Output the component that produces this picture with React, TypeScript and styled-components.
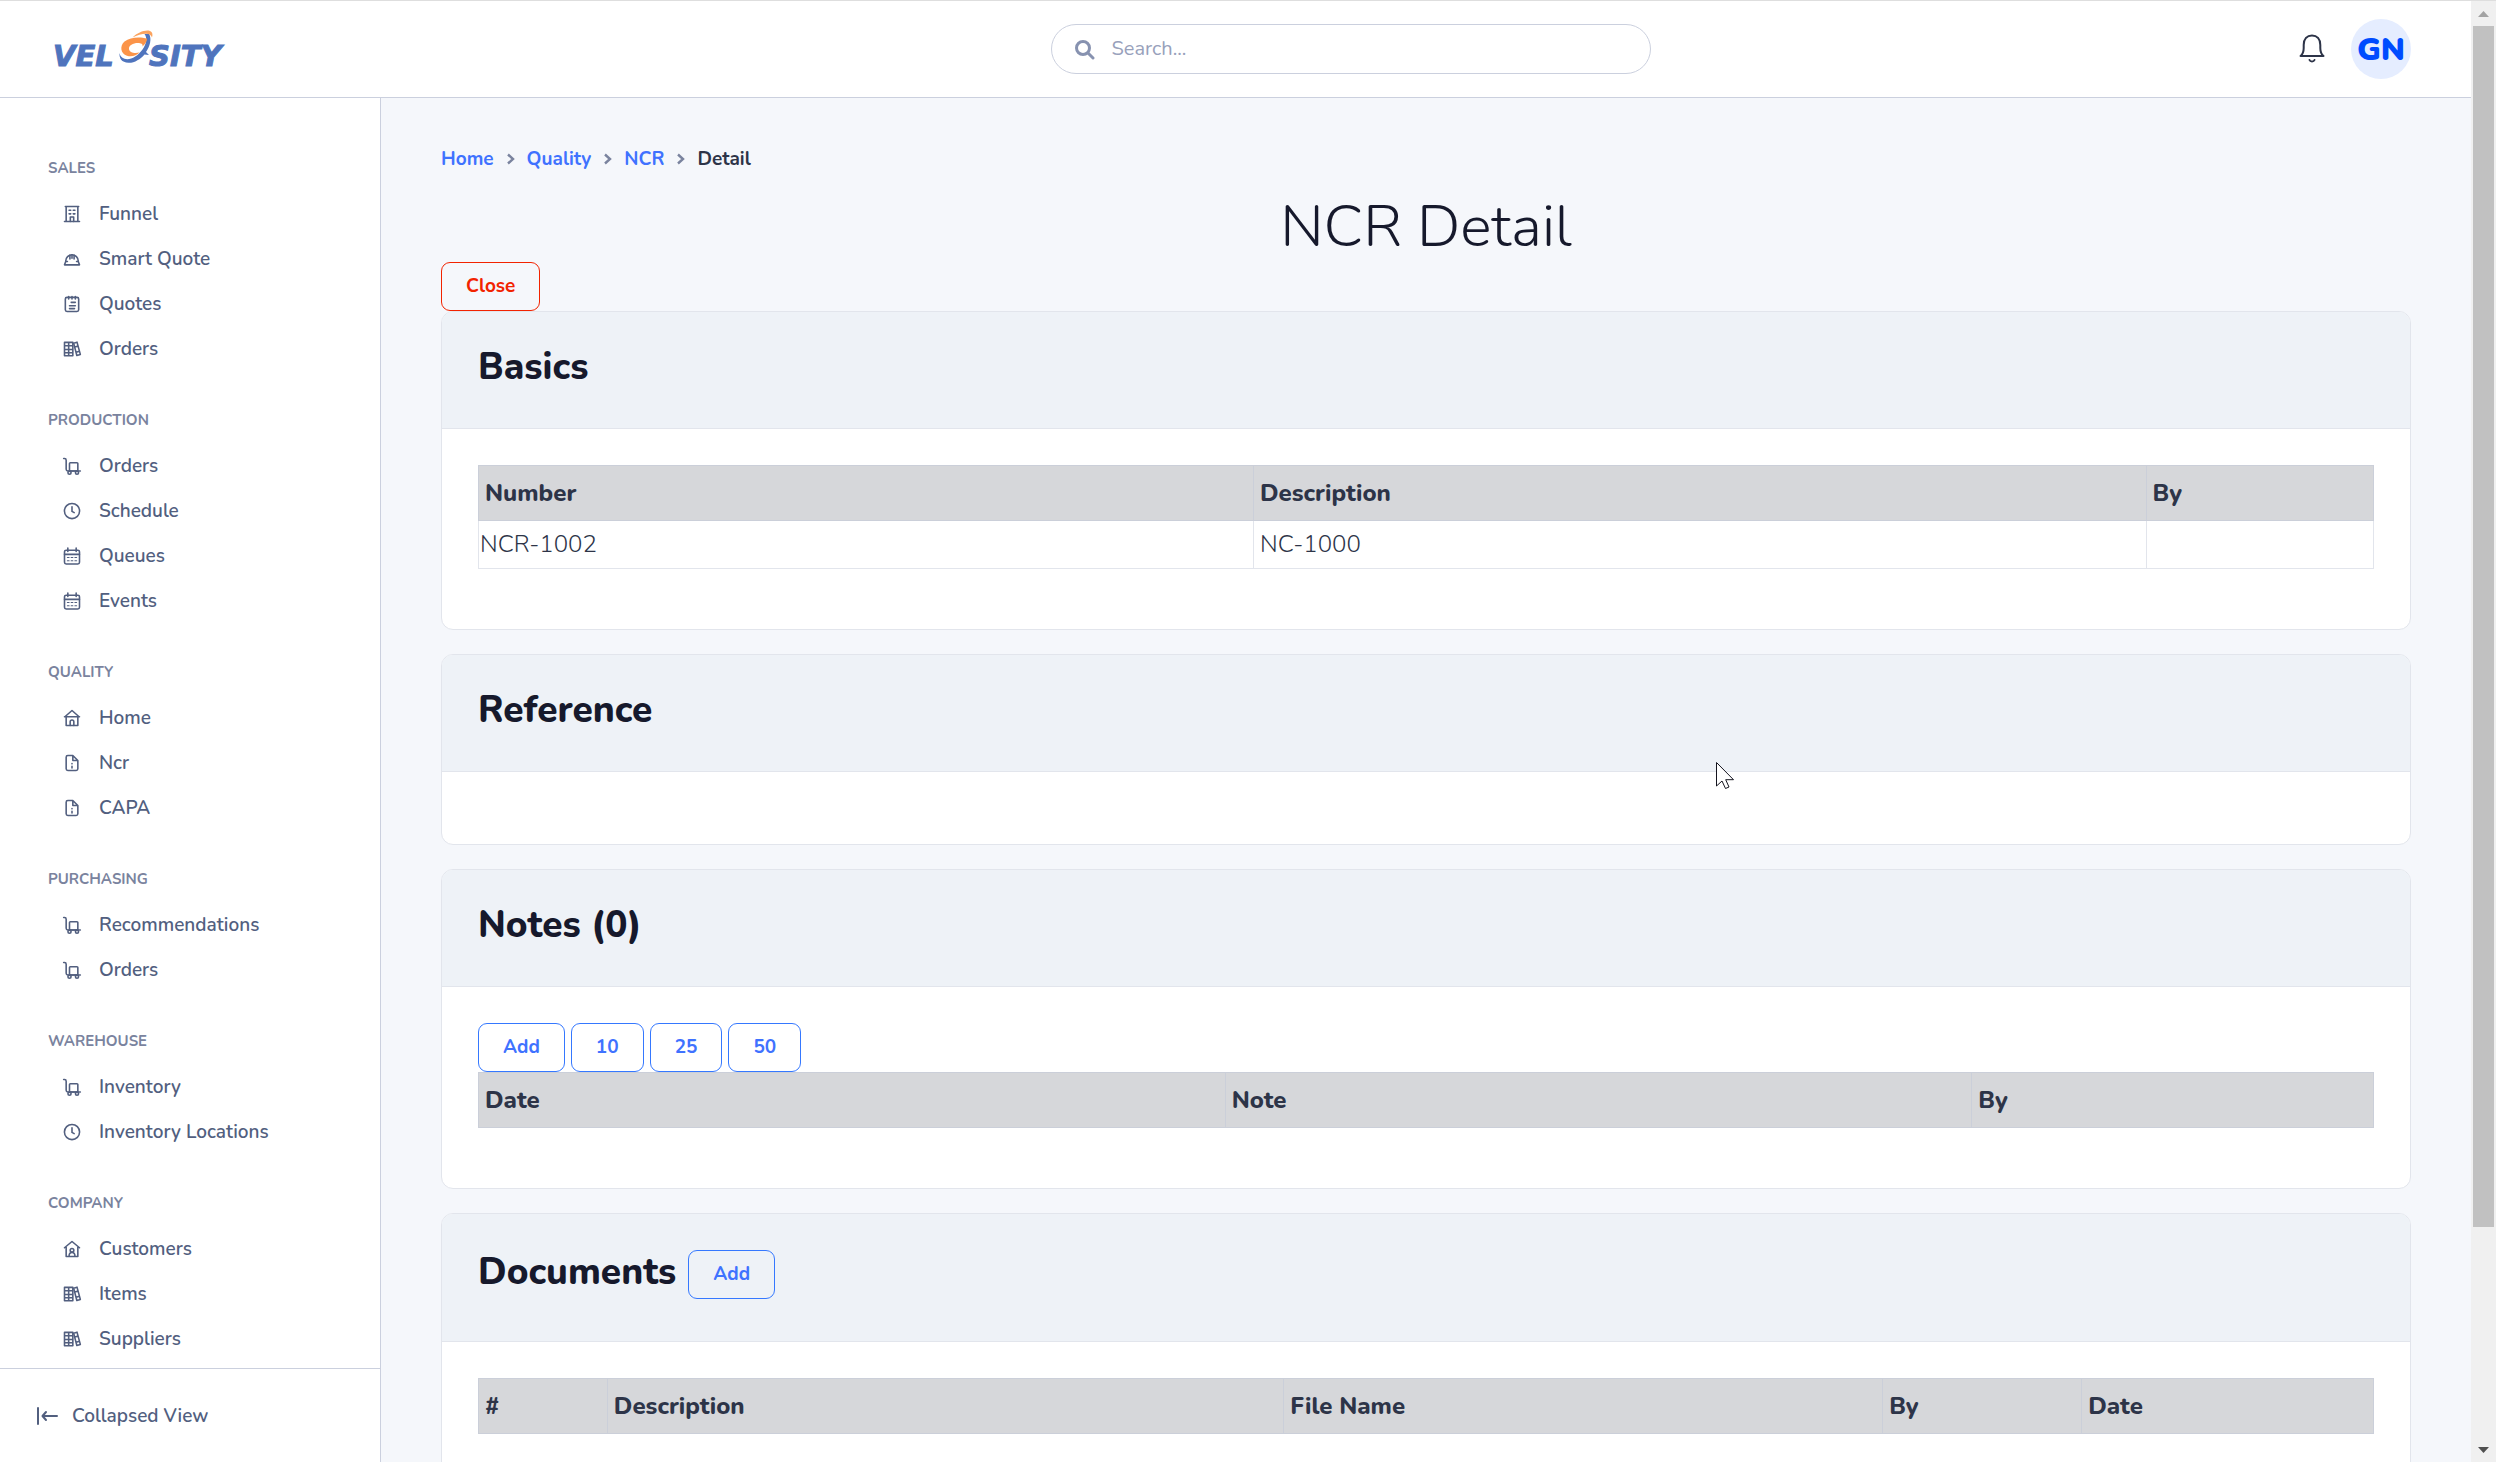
import React from "react";
import styled, { createGlobalStyle } from "styled-components";

const color = {
  ink: "#16192c",
  text: "#2d3448",
  nav: "#525f7f",
  muted: "#7a839e",
  line: "#cbd0de",
  cardLine: "#e2e5ec",
  page: "#f5f7fb",
  cardHead: "#eef2f7",
  tableHead: "#d6d7da",
  primary: "#3f72ff",
  danger: "#f22300",
};

const GlobalStyle = createGlobalStyle`
  *, *::before, *::after { box-sizing: border-box; }
  body {
    margin: 0;
    background: ${color.page};
    color: ${color.text};
    font-family: Nunito, Lato, "Open Sans", sans-serif;
    font-size: 24px;
    line-height: 36px;
  }
  h1, h2, h3, ul, ol { margin: 0; padding: 0; }
  ul, ol { list-style: none; }
  a { text-decoration: none; }
  button, input { font: inherit; }
`;

/* ---------- shell ---------- */

const Shell = styled.div`
  position: relative;
  display: flex;
  height: 100vh;
  overflow: hidden;
  border-top: 1px solid #dedede;
`;

const Frame = styled.div`
  flex: 1;
  min-width: 0;
  display: flex;
  flex-direction: column;
`;

const TopBar = styled.header`
  flex: none;
  display: flex;
  align-items: center;
  justify-content: space-between;
  height: 97px;
  padding-right: 60px;
  background: #fff;
  border-bottom: 1px solid ${color.line};
`;

const Brand = styled.a`
  display: flex;
  width: 402px;
  padding-left: 48px;
`;

const SearchBox = styled.label`
  display: flex;
  align-items: center;
  gap: 17px;
  width: 600px;
  height: 50px;
  padding: 0 22px;
  border: 1px solid ${color.line};
  border-radius: 25px;
  color: #8792b0;
`;

const SearchInput = styled.input`
  flex: 1;
  min-width: 0;
  padding: 0;
  border: 0;
  outline: 0;
  background: none;
  color: ${color.text};
  font-size: 20px;
  &::placeholder { color: #98a1bb; opacity: 1; }
`;

const Account = styled.div`
  display: flex;
  align-items: center;
  gap: 26px;
`;

const BellButton = styled.button`
  display: flex;
  padding: 0;
  border: 0;
  background: none;
  color: ${color.text};
`;

const Avatar = styled.button`
  width: 60px;
  height: 60px;
  padding: 2px 0 0;
  border: 0;
  border-radius: 50%;
  background: #e5edff;
  color: #004cff;
  font-size: 32px;
  font-weight: 900;
`;

const Columns = styled.div`
  flex: 1;
  min-height: 0;
  display: flex;
`;

/* ---------- sidebar ---------- */

const Sidebar = styled.nav`
  flex: none;
  display: flex;
  flex-direction: column;
  width: 381px;
  background: #fff;
  border-right: 1px solid ${color.line};
`;

const NavScroll = styled.div`
  flex: 1;
  min-height: 0;
  overflow: hidden;
  display: flex;
  flex-direction: column;
  gap: 26px;
  padding: 47px 48px 0;
`;

const NavHeading = styled.h3`
  color: ${color.muted};
  font-size: 15px;
  font-weight: 700;
  line-height: 46px;
  text-transform: uppercase;
`;

const NavLink = styled.a`
  display: flex;
  align-items: center;
  gap: 17px;
  height: 45px;
  padding-left: 14px;
  color: ${color.nav};
  font-size: 19px;
  font-weight: 600;
`;

const CollapseButton = styled.button`
  display: flex;
  align-items: center;
  gap: 14px;
  height: 94px;
  padding: 0 37px;
  border: 0;
  border-top: 1px solid ${color.line};
  background: none;
  color: ${color.nav};
  font-size: 19px;
  font-weight: 600;
`;

/* ---------- content ---------- */

const Content = styled.main`
  flex: 1;
  min-width: 0;
  overflow: hidden;
  padding: 47px 60px 0;
`;

const Crumbs = styled.ol`
  display: flex;
  align-items: center;
  gap: 12px;
  height: 28px;
  font-size: 19px;
  font-weight: 700;
`;

const Crumb = styled.li`
  display: flex;
  align-items: center;
  gap: 12px;
  color: ${color.text};
  a { color: ${color.primary}; }
  svg { color: ${color.muted}; }
`;

const PageTitle = styled.h1`
  margin-top: 18px;
  color: ${color.ink};
  font-size: 59px;
  font-weight: 350;
  line-height: 71px;
  text-align: center;
`;

const ButtonRow = styled.div`
  display: flex;
  gap: 6px;
`;

const OutlineButton = styled.button<{ $tone?: "primary" | "danger" }>`
  height: 49px;
  padding: 0 24px 2px;
  border: 1px solid ${(p) => (p.$tone === "danger" ? color.danger : "#3578ff")};
  border-radius: 9px;
  background: transparent;
  color: ${(p) => (p.$tone === "danger" ? color.danger : color.primary)};
  font-size: 19px;
  font-weight: 700;
  line-height: 28px;
`;

const Card = styled.section`
  margin-bottom: 24px;
  border: 1px solid ${color.cardLine};
  border-radius: 12px;
  background: #fff;
  overflow: hidden;
`;

const CardHeader = styled.header`
  display: flex;
  align-items: flex-start;
  gap: 12px;
  padding: 36px 36px 42px;
  background: ${color.cardHead};
  border-bottom: 1px solid ${color.cardLine};
`;

const CardTitle = styled.h2<{ $tall?: boolean }>`
  color: ${color.ink};
  font-size: 37px;
  font-weight: 800;
  line-height: ${(p) => (p.$tall ? 44 : 38)}px;
`;

const CardBody = styled.div`
  padding: 36px;
`;

const DataTable = styled.table`
  width: 100%;
  margin-bottom: 24px;
  border-collapse: collapse;
  table-layout: fixed;
`;

const Th = styled.th<{ $w: string }>`
  width: ${(p) => p.$w};
  height: 55px;
  padding: 0 6px;
  border: 1px solid #cbcfd9;
  background: ${color.tableHead};
  font-weight: 800;
  text-align: left;
`;

const Td = styled.td`
  height: 48px;
  padding: 0 6px 2px;
  border: 1px solid ${color.cardLine};
  font-weight: 350;
  &:first-child { padding-left: 1px; }
`;

/* ---------- scrollbar and pointer ---------- */

const ScrollTrack = styled.div`
  flex: none;
  display: flex;
  flex-direction: column;
  align-items: center;
  width: 25px;
  background: #f0f0f0;
`;

const ScrollArrow = styled.span<{ $down?: boolean }>`
  height: 25px;
  display: flex;
  align-items: center;
  color: ${(p) => (p.$down ? "#4f4f4f" : "#a3a3a3")};
`;

const ScrollThumb = styled.div`
  flex: 851;
  width: 21px;
  background: #c1c1c1;
`;

const ScrollRest = styled.div`
  flex: 149;
`;

const Pointer = styled.svg`
  position: absolute;
  left: 1716px;
  top: 761px;
  pointer-events: none;
`;

/* ---------- icons ---------- */

const iconShapes = {
  building: (
    <>
      <path d="M3 21h18M5 21V3h14v18M4 3h16" />
      <path d="M10 21v-5.500h4V21" />
      <path d="M8.500 7.500h2M13.500 7.500h2M8.500 11.800h2M13.500 11.800h2" />
    </>
  ),
  hat: (
    <>
      <path d="M4.500 15v-.5a7.500 7.500 0 0 1 15 0v.5" />
      <path d="M4.500 15h2M17.500 15h2l1.500 4H3l1.500-4" />
      <path d="M9.500 7.500V12M14.500 7.500V12M12 7v4" />
    </>
  ),
  notes: (
    <>
      <rect x="4" y="4" width="16" height="17" rx="2" />
      <path d="M8 3v3M12 3v3M16 3v3M9 14h7M11 10h5M9 17.500h6" />
    </>
  ),
  books: (
    <>
      <path d="M3 4h5v16H3zM8 4h5v16H8zM3 8h10M3 16.500h10M3 12.500h10" />
      <path d="M14 5l4-1.200L22 18.500l-4.200 1.300zM15.500 9.500l3.800-1.200M17 16l4-1.200" />
    </>
  ),
  cart: (
    <>
      <path d="M2 3h1a2 2 0 0 1 2 2v11a2 2 0 0 0 2 2h15" />
      <rect x="9" y="8" width="10" height="10" rx="1" />
      <circle cx="9" cy="20" r="1.900" />
      <circle cx="18" cy="20" r="1.900" />
    </>
  ),
  clock: (
    <>
      <circle cx="12" cy="12" r="9.100" />
      <path d="M12 7v5.500l2.600 1.500" />
    </>
  ),
  calendar: (
    <>
      <rect x="3" y="5" width="18" height="16.500" rx="2" />
      <path d="M7 2.500v4M17 2.500v4M3 10h18" />
      <path d="M6.500 13.800h2M11 13.800h2M15.500 13.800h2M6.500 17.700h2M11 17.700h2M15.500 17.700h2" strokeWidth="1.400" />
    </>
  ),
  home: (
    <>
      <path d="M3 10.500h18M3.500 10.500L12 3l8.500 7.500M5 10.500V21h14V10.500" />
      <path d="M9.800 21v-4.500a2.200 2.200 0 0 1 4.400 0V21" />
    </>
  ),
  file: (
    <>
      <path d="M13 3H7a2 2 0 0 0-2 2v14a2 2 0 0 0 2 2h10a2 2 0 0 0 2-2V9zM13 3v6h6" />
      <path d="M12 12.500v.5M12 16v2" />
    </>
  ),
  houseUser: (
    <>
      <path d="M3 10.500L12 3l9 7.500M5 9.500V21h14V9.500" />
      <circle cx="12" cy="13.500" r="2.200" />
      <path d="M8.500 20.500c0-2.800 1.500-4.400 3.500-4.400s3.500 1.600 3.500 4.400" />
    </>
  ),
};

type IconName = keyof typeof iconShapes;

const Icon = ({ name }: { name: IconName }) => (
  <svg width="20" height="20" viewBox="0 0 24 24" fill="none" stroke="currentColor" strokeWidth="1.900" strokeLinejoin="round" strokeLinecap="round" aria-hidden="true">
    {iconShapes[name]}
  </svg>
);

const Logo = () => (
  <svg width="200" height="64" viewBox="48 16 200 64" role="img" aria-label="Velosity">
    <g fill="#4f74bd" stroke="#4f74bd" strokeWidth="1" fontFamily="'DejaVu Sans', sans-serif" fontWeight="700" fontStyle="italic" fontSize="29">
      <text x="53" y="65">VEL</text>
      <text x="149" y="65">SITY</text>
    </g>
    <path d="M119.500 52c-.5 5 2 9.500 9 9.800 6 .2 12-3.600 16-8.300l4.500.5-3-3c4-6 6-13 3-18.300l-4.500.3c3 4 2 10-2 15.500-5 7-12.500 11-18 9.200-3-1-4.500-3-5-5.700z" fill="#4f74bd" />
    <path d="M147 37.500c-7-2-17-1.500-22.500 3-5 4.500-4 12 2.500 14.200 4.500 1.400 9.500 0 12.500-3.200-5 1.200-10 .2-10.500-3.500-.4-4 5-6.500 10-6 3 .3 4 1.500 3.500 3.500 3-2.500 4.500-5.500 4.500-8z" fill="#fb9449" />
    <path d="M132.500 36.500c5-5 13-8 17.500-6.500 2.500 1 3 3.500 2 6.500-.8-2.300-2.500-3.800-6-3.800-4 0-9 1.300-13.500 3.800z" fill="#fba35f" />
  </svg>
);

const SearchIcon = () => (
  <svg width="21" height="21" viewBox="0 0 21 21" fill="none" stroke="currentColor" strokeWidth="3" strokeLinecap="round" aria-hidden="true">
    <circle cx="9" cy="9" r="6.500" />
    <path d="M14 14l5 5" />
  </svg>
);

const BellIcon = () => (
  <svg width="26" height="30" viewBox="0 0 26 30" fill="none" stroke="currentColor" strokeWidth="2" strokeLinecap="round" strokeLinejoin="round" aria-hidden="true">
    <path d="M1.500 22h23c-2.300-1.800-3.200-4-3.200-8v-3C21.300 5 18 1.500 13 1.500S4.700 5 4.700 11v3c0 4-.9 6.200-3.200 8z" />
    <path d="M10.500 26c.8 2 4.200 2 5 0" />
  </svg>
);

const ChevronIcon = () => (
  <svg width="9" height="12" viewBox="0 0 9 12" fill="none" stroke="currentColor" strokeWidth="2.400" aria-hidden="true">
    <path d="M2 1.500L7 6l-5 4.500" />
  </svg>
);

const CollapseIcon = () => (
  <svg width="21" height="18" viewBox="0 0 21 18" fill="none" stroke="currentColor" strokeWidth="2" strokeLinecap="round" strokeLinejoin="round" aria-hidden="true">
    <path d="M1 1v16M20 9H6M9 5L5.500 9 9 13" />
  </svg>
);

/* ---------- data ---------- */

const navigation: { title: string; items: [string, IconName][] }[] = [
  { title: "Sales", items: [["Funnel", "building"], ["Smart Quote", "hat"], ["Quotes", "notes"], ["Orders", "books"]] },
  { title: "Production", items: [["Orders", "cart"], ["Schedule", "clock"], ["Queues", "calendar"], ["Events", "calendar"]] },
  { title: "Quality", items: [["Home", "home"], ["Ncr", "file"], ["CAPA", "file"]] },
  { title: "Purchasing", items: [["Recommendations", "cart"], ["Orders", "cart"]] },
  { title: "Warehouse", items: [["Inventory", "cart"], ["Inventory Locations", "clock"]] },
  { title: "Company", items: [["Customers", "houseUser"], ["Items", "books"], ["Suppliers", "books"]] },
];

type Column = [string, string];

const basicsColumns: Column[] = [["Number", "40.9%"], ["Description", "47.1%"], ["By", "12%"]];
const notesColumns: Column[] = [["Date", "39.4%"], ["Note", "39.4%"], ["By", "21.2%"]];
const documentColumns: Column[] = [["#", "6.8%"], ["Description", "35.7%"], ["File Name", "31.6%"], ["By", "10.5%"], ["Date", "15.4%"]];

const Table = ({ columns, rows = [] }: { columns: Column[]; rows?: string[][] }) => (
  <DataTable>
    <thead>
      <tr>
        {columns.map(([label, width]) => (
          <Th key={label} $w={width} scope="col">{label}</Th>
        ))}
      </tr>
    </thead>
    <tbody>
      {rows.map((row) => (
        <tr key={row[0]}>
          {row.map((cell, i) => <Td key={i}>{cell}</Td>)}
        </tr>
      ))}
    </tbody>
  </DataTable>
);

export default function App() {
  return (
    <>
      <GlobalStyle />
      <Shell>
        <Frame>
          <TopBar>
            <Brand href="#"><Logo /></Brand>
            <SearchBox>
              <SearchIcon />
              <SearchInput type="search" placeholder="Search..." aria-label="Search" />
            </SearchBox>
            <Account>
              <BellButton type="button" aria-label="Notifications"><BellIcon /></BellButton>
              <Avatar type="button">GN</Avatar>
            </Account>
          </TopBar>

          <Columns>
            <Sidebar>
              <NavScroll>
                {navigation.map((section) => (
                  <section key={section.title}>
                    <NavHeading>{section.title}</NavHeading>
                    <ul>
                      {section.items.map(([label, icon]) => (
                        <li key={label}>
                          <NavLink href="#"><Icon name={icon} />{label}</NavLink>
                        </li>
                      ))}
                    </ul>
                  </section>
                ))}
              </NavScroll>
              <CollapseButton type="button"><CollapseIcon />Collapsed View</CollapseButton>
            </Sidebar>

            <Content>
              <Crumbs>
                {["Home", "Quality", "NCR"].map((label) => (
                  <Crumb key={label}><a href="#">{label}</a><ChevronIcon /></Crumb>
                ))}
                <Crumb aria-current="page">Detail</Crumb>
              </Crumbs>
              <PageTitle>NCR Detail</PageTitle>
              <ButtonRow>
                <OutlineButton type="button" $tone="danger">Close</OutlineButton>
              </ButtonRow>

              <Card>
                <CardHeader><CardTitle>Basics</CardTitle></CardHeader>
                <CardBody>
                  <Table columns={basicsColumns} rows={[["NCR-1002", "NC-1000", ""]]} />
                </CardBody>
              </Card>

              <Card>
                <CardHeader><CardTitle>Reference</CardTitle></CardHeader>
                <CardBody />
              </Card>

              <Card>
                <CardHeader><CardTitle>Notes (0)</CardTitle></CardHeader>
                <CardBody>
                  <ButtonRow>
                    {["Add", "10", "25", "50"].map((label) => (
                      <OutlineButton key={label} type="button">{label}</OutlineButton>
                    ))}
                  </ButtonRow>
                  <Table columns={notesColumns} />
                </CardBody>
              </Card>

              <Card>
                <CardHeader>
                  <CardTitle $tall>Documents</CardTitle>
                  <OutlineButton type="button">Add</OutlineButton>
                </CardHeader>
                <CardBody>
                  <Table columns={documentColumns} />
                </CardBody>
              </Card>
            </Content>
          </Columns>
        </Frame>

        <ScrollTrack aria-hidden="true">
          <ScrollArrow>
            <svg width="11" height="6" viewBox="0 0 11 6"><path d="M0 6L5.500 0 11 6z" fill="currentColor" /></svg>
          </ScrollArrow>
          <ScrollThumb />
          <ScrollRest />
          <ScrollArrow $down>
            <svg width="11" height="6" viewBox="0 0 11 6"><path d="M0 0L5.500 6 11 0z" fill="currentColor" /></svg>
          </ScrollArrow>
        </ScrollTrack>

        <Pointer width="19" height="28" viewBox="0 0 19 28" aria-hidden="true">
          <path d="M.5.500v23.500l5.500-5 3.500 7.500 3.500-1.500-3.300-7.300h7.800z" fill="#fff" stroke="#15151f" strokeWidth="1" />
        </Pointer>
      </Shell>
    </>
  );
}
